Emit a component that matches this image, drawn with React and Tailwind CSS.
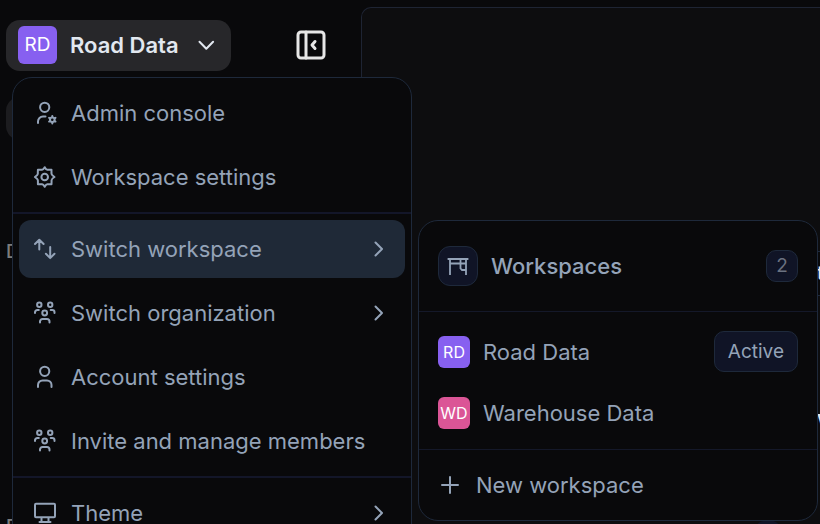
import React from "react";

function Icon({ size = 24, stroke = 2, className = "", children }) {
  return (
    <svg
      width={size}
      height={size}
      viewBox={`0 0 ${size} ${size}`}
      fill="none"
      stroke="currentColor"
      strokeWidth={stroke}
      strokeLinecap="round"
      strokeLinejoin="round"
      aria-hidden="true"
      className={`shrink-0 ${className}`}
    >
      {children}
    </svg>
  );
}

const AdminIcon = () => (
  <Icon>
    <circle cx="11.7" cy="6.3" r="4.6" />
    <path d="M5 22v-1.5a5 5 0 0 1 5-5h2.500" />
    <circle cx="19.300" cy="18.700" r="2.300" />
    <path d="M19.300 15v1M19.300 21.400v1M16.100 16.850l.9.5M21.600 20.050l.9.5M16.100 20.550l.9-.5M21.600 17.350l.9-.5" />
  </Icon>
);

const GearIcon = () => (
  <Icon>
    <circle cx="11.7" cy="12" r="3.300" />
    <path d="M11.700 2.200q1.300 2.400 2.600 2.500t4.200 0q-.1 3.400.1 4.400t2.900 2.900q-2.900 1.900-2.900 2.900t-.1 4.400q-3 0-4.200 0t-2.600 2.500q-1.300-2.400-2.600-2.500t-4.200 0q.1-3.400-.1-4.400T1.900 12q2.900-1.900 2.900-2.900t.1-4.400q3 0 4.200 0t2.600-2.500z" />
  </Icon>
);

const SwitchIcon = () => (
  <Icon>
    <path d="M6.300 12.500V3M2 7l4.300-4.300L10.600 7M17.200 10v11M12.900 16.800l4.300 4.300 4.300-4.300" />
  </Icon>
);

const GroupIcon = () => (
  <Icon>
    <circle cx="6.300" cy="3.700" r="2.200" />
    <circle cx="17.200" cy="3.700" r="2.200" />
    <circle cx="11.700" cy="12" r="2.400" />
    <path d="M2 12v-.7A2.300 2.300 0 0 1 4.300 9h1.500M21.500 12v-.7A2.300 2.300 0 0 0 19.200 9h-1.500M7 21.500v-1a2.500 2.500 0 0 1 2.500-2.500h4.500a2.500 2.500 0 0 1 2.500 2.500v1" />
  </Icon>
);

const UserIcon = () => (
  <Icon>
    <circle cx="11.700" cy="6.300" r="4.600" />
    <path d="M5 22v-2a4.500 4.500 0 0 1 4.500-4.500h4.500a4.500 4.500 0 0 1 4.500 4.500v2" />
  </Icon>
);

const MonitorIcon = () => (
  <Icon>
    <rect x="2" y="2.700" width="20" height="13.600" rx="1" />
    <path d="M8.500 17v3.500M15.500 17v3.500M6.500 21h11" />
  </Icon>
);

const DeskIcon = () => (
  <Icon stroke={1.8}>
    <path d="M2.500 5h19M4 5v15M20 5v15M4 9.500h16M14.500 5v9.500l1.500 1.500h4" strokeLinecap="square" strokeLinejoin="miter" />
  </Icon>
);

const ChevronRight = () => (
  <Icon className="ml-auto">
    <path d="M8.500 5.500l6.500 6.500-6.500 6.500" />
  </Icon>
);

function MenuItem({ icon, label, submenu, active }) {
  return (
    <button
      type="button"
      role="menuitem"
      aria-haspopup={submenu ? "menu" : undefined}
      className={`flex h-[58px] w-full shrink-0 items-center gap-3.5 rounded-xl px-3.5 text-left ${
        active ? "bg-[#1f2937]" : ""
      }`}
    >
      {icon}
      <span className="whitespace-nowrap">{label}</span>
      {submenu && <ChevronRight />}
    </button>
  );
}

function Group({ children }) {
  return <div className="flex flex-col gap-1.5 p-1.5">{children}</div>;
}

function Avatar({ initials, className }) {
  return (
    <span className={`flex shrink-0 items-center justify-center text-white ${className}`}>
      {initials}
    </span>
  );
}

function WorkspaceMenu() {
  return (
    <div
      role="menu"
      className="absolute top-[77px] left-3 w-[400px] divide-y-2 divide-[#131629] rounded-[20px] border border-[#1e293b] bg-[#09090b]"
    >
      <Group>
        <MenuItem icon={<AdminIcon />} label="Admin console" />
        <MenuItem icon={<GearIcon />} label="Workspace settings" />
      </Group>
      <Group>
        <MenuItem icon={<SwitchIcon />} label="Switch workspace" submenu active />
        <MenuItem icon={<GroupIcon />} label="Switch organization" submenu />
        <MenuItem icon={<UserIcon />} label="Account settings" />
        <MenuItem icon={<GroupIcon />} label="Invite and manage members" />
      </Group>
      <Group>
        <MenuItem icon={<MonitorIcon />} label="Theme" submenu />
      </Group>
    </div>
  );
}

function WorkspaceRow({ initials, color, name, active }) {
  return (
    <button type="button" role="menuitem" className="flex h-[61px] w-full items-center gap-[13px] text-left">
      <Avatar initials={initials} className={`size-8 rounded-md text-base ${color}`} />
      <span className="whitespace-nowrap">{name}</span>
      {active && (
        <span className="ml-auto flex h-[41px] items-center rounded-[10px] border border-[#1e293b] bg-[#101426] px-[13px] text-[19px]">
          Active
        </span>
      )}
    </button>
  );
}

function WorkspacesSubmenu() {
  return (
    <div
      role="menu"
      className="absolute top-[220px] left-[418px] w-[400px] divide-y divide-[#141829] rounded-[20px] border border-[#1e293b] bg-[#09090b]"
    >
      <div className="flex h-[91px] items-center gap-[13px] px-[19px]">
        <span className="flex size-10 items-center justify-center rounded-xl border border-[#1e293b] bg-[#101426]">
          <DeskIcon />
        </span>
        <span className="font-medium">Workspaces</span>
        <span className="ml-auto flex size-8 items-center justify-center rounded-[10px] border border-[#1e293b] bg-[#101426] text-[19px] text-[#6b7280]">
          2
        </span>
      </div>
      <div className="px-[19px] pt-[9px] pb-1.5">
        <WorkspaceRow initials="RD" color="bg-[#8760f0]" name="Road Data" active />
        <WorkspaceRow initials="WD" color="bg-[#db5596]" name="Warehouse Data" />
      </div>
      <button type="button" role="menuitem" className="flex h-[70px] w-full items-center gap-3.5 px-[19px] text-left">
        <Icon>
          <path d="M12 4v16M4 12h16" />
        </Icon>
        <span>New workspace</span>
      </button>
    </div>
  );
}

export default function App() {
  return (
    <div className="relative flex h-screen overflow-hidden bg-[#09090b] font-['Inter',sans-serif] text-[22px] leading-8 text-[#94a3b8]">
      <aside className="flex w-[361px] shrink-0 flex-col overflow-hidden pt-5 pr-[35px] pl-1.5">
        <div className="flex shrink-0 items-center justify-between">
          <button
            type="button"
            aria-expanded="true"
            className="flex h-[51px] w-[225px] items-center rounded-[14px] bg-[#27272a] px-3 pb-px text-[#e2e8f0]"
          >
            <Avatar initials="RD" className="h-[38px] w-[39px] rounded-md bg-[#8760f0] text-[19px]" />
            <span className="ml-[13px] font-semibold whitespace-nowrap">Road Data</span>
            <Icon className="ml-auto">
              <path d="M4.500 8.800l6.800 7 6.800-7" />
            </Icon>
          </button>
          <button type="button" aria-label="Collapse sidebar" className="pb-px text-[#e7e7e7]">
            <Icon size={30} stroke={3}>
              <rect x="2" y="2" width="26" height="26" rx="3" />
              <path d="M10 2v26" />
              <path d="M19 11.500L16 15l3 3.500" />
            </Icon>
          </button>
        </div>
        <div className="mt-[26px] h-[43px] shrink-0 rounded-[14px] bg-[#1c1c1f]" />
        <div className="mt-24 shrink-0 text-[19px] font-medium text-[#7c7c7c]">D</div>
        <div className="mt-[243px] shrink-0 text-[19px] font-medium text-[#7c7c7c]">D</div>
      </aside>
      <main className="mt-[7px] flex flex-1 flex-col overflow-hidden rounded-tl-[10px] border-t border-l border-[#1e2433] bg-[#0d0d0f] pt-[243px] text-[#e2e8f0]">
        <div className="ml-16 flex h-[45px] shrink-0 items-center justify-end border-y border-[#1e293b] bg-[#09090b]">
          <span className="w-[3px] overflow-hidden text-[19px]">t</span>
        </div>
        <div className="mt-[106px] w-[3px] shrink-0 self-end overflow-hidden font-semibold">w</div>
        <div className="mt-[86px] mr-[36px] size-8 shrink-0 self-end rounded-full bg-[#101426]" />
      </main>
      <WorkspaceMenu />
      <WorkspacesSubmenu />
    </div>
  );
}
